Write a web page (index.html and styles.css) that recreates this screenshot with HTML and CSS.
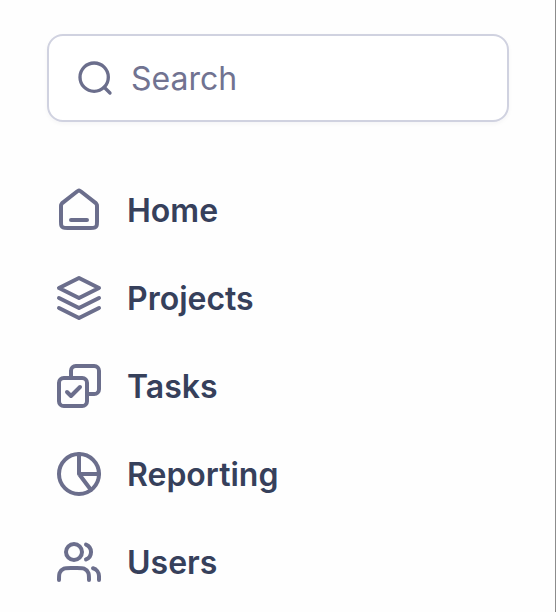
FILE: index.html
```
<!DOCTYPE html>
<html lang="en">
<head>
    <meta charset="UTF-8">
    <meta name="viewport" content="width=device-width, initial-scale=1.0">
    <title>Navigation</title>
    <link rel="stylesheet" href="styles.css">
</head>
<body>
    <aside class="sidebar">
        <form class="search" role="search">
            <label for="search" aria-label="Search">
                <svg class="search-icon" viewBox="0 0 20 20">
                    <circle cx="9.58" cy="9.58" r="7.08"/>
                    <path d="M17.5 17.5L14.6 14.6"/>
                </svg>
            </label>
            <input type="search" id="search" name="search" placeholder="Search">
        </form>

        <nav class="menu">
            <a href="#home">
                <svg class="icon" viewBox="0 0 24 24">
                    <path d="M8 17h8M11.02 2.76L4.24 8.04c-.46.35-.69.53-.85.75-.14.2-.25.42-.32.65C3 9.7 3 9.99 3 10.56V17.8c0 1.12 0 1.68.22 2.11.19.37.5.68.87.87.43.22.99.22 2.11.22h11.6c1.12 0 1.68 0 2.11-.22.37-.19.68-.5.87-.87.22-.43.22-.99.22-2.11v-7.24c0-.57 0-.86-.07-1.12a2 2 0 0 0-.32-.65c-.16-.22-.39-.4-.85-.75l-6.78-5.28c-.35-.27-.53-.41-.72-.46a1 1 0 0 0-.52 0c-.19.05-.37.19-.72.46z"/>
                </svg>
                <span>Home</span>
            </a>
            <a href="#projects">
                <svg class="icon" viewBox="0 0 24 24">
                    <path d="M12 2L2 7l10 5 10-5zM2 12l10 5 10-5M2 17l10 5 10-5"/>
                </svg>
                <span>Projects</span>
            </a>
            <a href="#tasks">
                <svg class="icon" viewBox="0 0 24 24">
                    <rect x="2" y="8" width="14" height="14" rx="2.4"/>
                    <path d="M6 15l2 2 4.5-4.5M8 8V4.4A2.4 2.4 0 0 1 10.4 2h9.2A2.4 2.4 0 0 1 22 4.4v9.2a2.4 2.4 0 0 1-2.4 2.4H16"/>
                </svg>
                <span>Tasks</span>
            </a>
            <a href="#reporting">
                <svg class="icon" viewBox="0 0 24 24">
                    <circle cx="12" cy="12" r="10"/>
                    <path d="M12 2v10h10M12 12l6 8"/>
                </svg>
                <span>Reporting</span>
            </a>
            <a href="#users">
                <svg class="icon" viewBox="0 0 24 24">
                    <circle cx="9.5" cy="7" r="4"/>
                    <path d="M22 21v-2a4 4 0 0 0-3-3.87M15.5 3.29a4 4 0 0 1 0 7.42M17 21c0-1.86 0-2.8-.3-3.53a4 4 0 0 0-2.17-2.17C13.8 15 12.86 15 11 15H8c-1.86 0-2.8 0-3.53.3a4 4 0 0 0-2.17 2.17C2 18.2 2 19.14 2 21"/>
                </svg>
                <span>Users</span>
            </a>
        </nav>
    </aside>
</body>
</html>
```
FILE: styles.css
```
* {
    box-sizing: border-box;
}

body {
    margin: 0;
    font-family: 'Inter', sans-serif;
    background-color: #fefefe;
}

.sidebar {
    min-height: 100vh;
    padding: 34px 46px 20px 47px;
    border-right: 1px solid #8c8c8c;
}

.search {
    display: flex;
    align-items: center;
    gap: 16px;
    height: 88px;
    padding: 0 26px;
    border: 2px solid #d0d2e0;
    border-radius: 16px;
    background-color: #fff;
    box-shadow: 0 2px 4px rgba(16, 24, 40, 0.04);
}

.search label {
    display: flex;
}

.search input {
    flex: 1;
    min-width: 0;
    padding: 0;
    border: none;
    outline: none;
    background: none;
    color: #36405b;
    font-family: inherit;
    font-size: 32px;
    appearance: none;
}

.search input::placeholder {
    color: #717391;
    opacity: 1;
}

.icon,
.search-icon {
    flex: none;
    width: 48px;
    height: 48px;
    fill: none;
    stroke: #6b6e8c;
    stroke-width: 2;
    stroke-linecap: round;
    stroke-linejoin: round;
}

.search-icon {
    width: 40px;
    height: 40px;
    stroke-width: 1.67;
}

.menu {
    display: flex;
    flex-direction: column;
    gap: 8px;
    margin-top: 48px;
}

.menu a {
    display: flex;
    align-items: center;
    gap: 24px;
    height: 80px;
    padding: 0 8px;
    border-radius: 12px;
    color: #36405b;
    font-size: 32px;
    font-weight: 600;
    text-decoration: none;
}

.menu a:hover {
    background-color: #f6f6fa;
}
```
